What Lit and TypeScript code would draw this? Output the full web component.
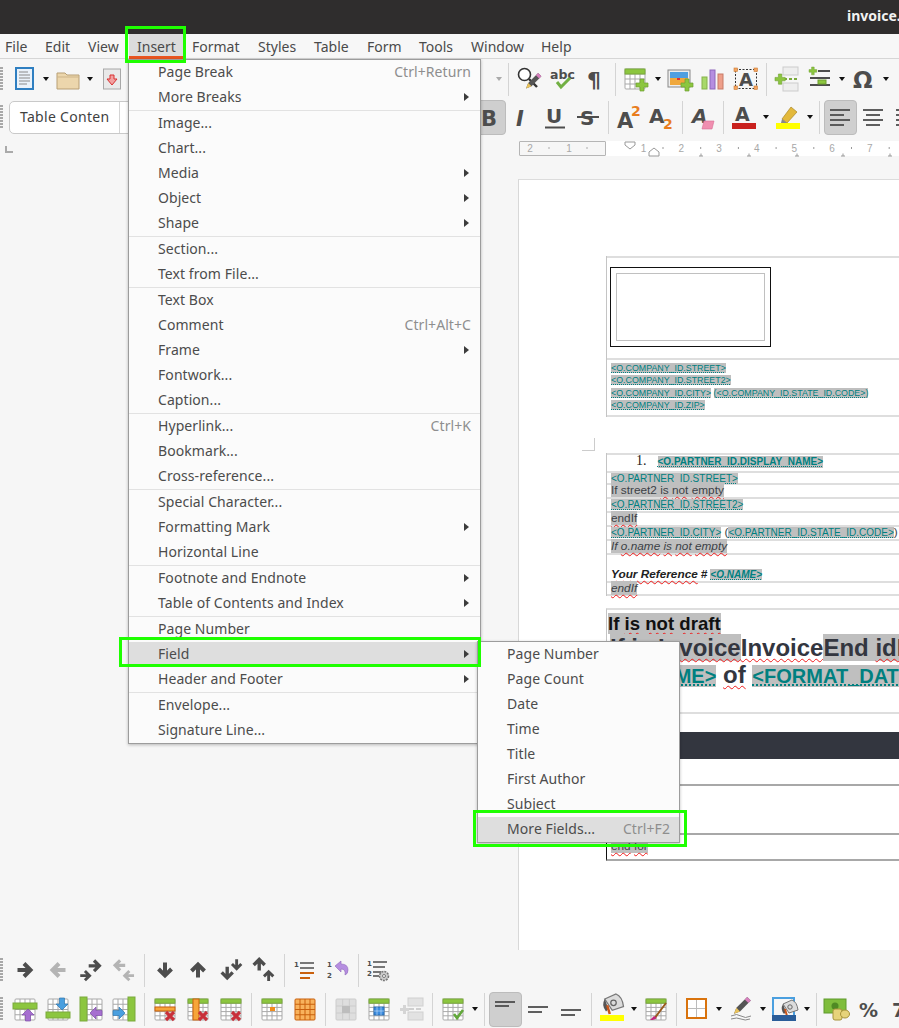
import { LitElement, html, css, svg } from "lit";
import { customElement } from "lit/decorators.js";

const D = "#4d4d4d";
const G = "#8cc63f";
const grid = (x: number, y: number, w: number, h: number, c: number, r: number, hdr = true, line = "#a9a9a9", fill = "#fff") => {
  const cw = w / c, rh = h / r;
  return svg`<rect x=${x} y=${y} width=${w} height=${h} fill=${fill} stroke=${line} rx="1"/>
    ${Array.from({ length: c - 1 }, (_, i) => svg`<path d="M${x + cw * (i + 1)} ${y}v${h}" stroke=${line}/>`)}
    ${Array.from({ length: r - 1 }, (_, i) => svg`<path d="M${x} ${y + rh * (i + 1)}h${w}" stroke=${line}/>`)}
    ${hdr ? svg`<rect x=${x} y=${y} width=${w} height=${rh} fill=${G} stroke="#7aa93c"/>` : ""}`;
};
const arrow = (rot: number, color = D, s = 1, tx = 0, ty = 0, sw = 4) =>
  svg`<g transform="translate(${tx} ${ty}) scale(${s}) rotate(${rot} 12 12)"><path d="M4.500 12h12.500M11 5.500l6.500 6.500-6.500 6.500" fill="none" stroke=${color} stroke-width=${sw}/></g>`;
const fat = (rot: number, color: string, stroke: string, tx: number, ty: number, s = 1) =>
  svg`<g transform="translate(${tx} ${ty}) scale(${s}) rotate(${rot} 6 6)"><path d="M6 0l6 6H8.500v6h-5V6H0z" fill=${color} stroke=${stroke} stroke-width=".7"/></g>`;
const plus = (x: number, y: number, s = 1) =>
  svg`<g transform="translate(${x} ${y}) scale(${s})"><path d="M4 0h4v4h4v4H8v4H4V8H0V4h4z" fill=${G} stroke="#6f9e32" stroke-width=".7"/></g>`;
const redX = (x: number, y: number) =>
  svg`<path d="M${x} ${y}l8 8M${x + 8} ${y}l-8 8" stroke="#c8303a" stroke-width="3.200"/>`;
const bar = (x: number, w: number, c: string, y = 20, h = 4) => svg`<rect x=${x} y=${y} width=${w} height=${h} fill=${c}/>`;
const lines = (ys: number[], ws: number[], x = 2, c = D, sw = 1.8) =>
  ys.map((y, i) => svg`<path d="M${x} ${y}h${ws[i]}" stroke=${c} stroke-width=${sw}/>`);
const T = (x: number, y: number, t: string, size: number, fill = D, extra = "") =>
  svg`<text x=${x} y=${y} font-size=${size} font-family="DejaVu Sans" font-weight="bold" font-style=${extra || "normal"} fill=${fill}>${t}</text>`;
const bucket = (x: number, y: number, s = 1) =>
  svg`<g transform="translate(${x} ${y}) scale(${s})"><path d="M3 4L12 0q5 2 6 10l-9 3z" fill="#dcdcdc" stroke="#777"/><circle cx="10" cy="7" r="2.200" fill="none" stroke="#666"/><path d="M3 4q-3 5 1 10l2-2z" fill="#555"/><path d="M5 9l2 7" stroke="#c8551b" stroke-width="2"/></g>`;
const pencil = (x: number, y: number, len = 1) =>
  svg`<g transform="translate(${x} ${y}) scale(${len})"><path d="M0 14l2-5L11 0l3 3-9 9z" fill="#555"/><path d="M11 0l3 3-2 2-3-3z" fill="#d77fbd"/><path d="M0 14l2-5 3 3z" fill="#e9c25a"/></g>`;

const ICONS: Record<string, unknown> = {
  newdoc: svg`<rect x="4" y="1" width="17" height="21" fill="#eaf2fa" stroke="#2f7fc1" stroke-width="2"/><path d="M7 5h9M7 8h11M7 11h11M7 14h11M7 17h8" stroke="#8a8a8a"/>`,
  folder: svg`<path d="M1 6h8l2 2h12v14H1z" fill="#ecd6ac" stroke="#b89f74"/><path d="M1 10h22" stroke="#cdb489"/>`,
  save: svg`<rect x="3.500" y="2" width="17" height="20" fill="#e9e9e9" stroke="#a8a8a8"/><path d="M10 8h4v4h3l-5 6-5-6h3z" fill="#f2a0a0" stroke="#d83030"/>`,
  find: svg`<circle cx="7.500" cy="7.500" r="6" fill="#fff" stroke="#333" stroke-width="1.600"/><path d="M12 12l8 8" stroke="#333" stroke-width="2.400"/>${pencil(9, 6, 1.1)}`,
  abc: svg`${T(0, 12, "abc", 12.5)}<path d="M7 15l4 5 9-9" fill="none" stroke="#72b043" stroke-width="3"/>`,
  pil: T(4, 21, "¶", 22),
  tableplus: svg`${grid(1, 2, 20, 20, 4, 4)}${plus(12, 12)}`,
  imgplus: svg`<rect x="0" y="3" width="22" height="17" fill="#eee" stroke="#888"/><rect x="2" y="5" width="18" height="6" fill="#4f9fe0"/><rect x="2" y="11" width="18" height="7" fill="#f0a83c"/><path d="M9 12h3" stroke="#d33" stroke-width="2"/>${plus(13, 12)}`,
  chart: svg`<rect x="1" y="10" width="5" height="12" fill="#a8d86a" stroke="#85b24a"/><rect x="9" y="3" width="5" height="19" fill="#b58ee0" stroke="#8e66bb"/><rect x="17" y="7" width="5" height="15" fill="#ee9f8a" stroke="#c77b66"/>`,
  textbox: svg`<rect x="1.500" y="2.500" width="21" height="19" fill="none" stroke="#333" stroke-dasharray="2 1.500"/>${[[0, 1], [20, 1], [0, 19], [20, 19]].map(([x, y]) => svg`<rect x=${x} y=${y} width="3.500" height="3.500" fill="#f4a460" stroke="#c87a35" stroke-width=".6"/>`)}${T(5, 19, "A", 18)}`,
  pagebreak: svg`<rect x="8" y="0" width="15" height="8" fill="#eee" stroke="#ccc"/><rect x="8" y="16" width="15" height="8" fill="#eee" stroke="#ccc"/><path d="M9 12h3m2 0h3m2 0h3" stroke="#7aa93c" stroke-width="2"/>${plus(0, 7, .85)}`,
  field: svg`${plus(1, 0, .65)}<path d="M10 4h12M2 11h20M2 18h20" stroke=${D} stroke-width="2"/><rect x="10" y="13" width="8" height="4" fill=${G} stroke="#6f9e32"/>`,
  omega: T(1, 21, "Ω", 23),
  B: T(4, 21, "B", 21),
  I: T(6, 21, "I", 21, D, "italic"),
  U: svg`${T(3, 18, "U", 20)}<path d="M2 22.500h20" stroke=${D} stroke-width="2"/>`,
  S: svg`${T(4, 20, "S", 20)}<path d="M1 12h22" stroke=${D} stroke-width="2"/>`,
  sup: svg`${T(0, 23, "A", 21)}${T(14, 11, "2", 14, "#e87d1e")}`,
  sub: svg`${T(-1, 18, "A", 20)}${T(13, 24, "2", 14, "#e87d1e")}`,
  erase: svg`${T(1, 18, "A", 20, D, "italic")}<path d="M13 16h10l-2 8H11z" fill="#f08fb0" stroke="#d86d93" stroke-width=".6"/>`,
  fcolor: svg`${T(3, 16, "A", 19)}${bar(0, 24, "#c9211e", 18, 6)}`,
  hl: svg`<path d="M6 14L15 2l6 5-10 11z" fill="#e3b93c" stroke="#a98726" stroke-width=".7"/><path d="M6 14l5 4-4 1-2-1z" fill="#888"/>${bar(0, 24, "#ffff00", 18, 6)}`,
  al: svg`${lines([5, 10, 15, 20], [20, 14, 20, 14])}`,
  ar: svg`${lines([5, 10, 15, 20], [20, 14, 20, 14], 2)}`,
  r: arrow(0),
  lg: arrow(180, "#b4b4b4"),
  rr: svg`${arrow(0, D, .82, 6, -2)}${arrow(0, D, .72, -2, 9)}`,
  ll: svg`${arrow(180, "#b4b4b4", .78, -2, -2)}${arrow(180, "#b4b4b4", .72, 8, 9)}`,
  d: arrow(90),
  u: arrow(-90),
  dd: svg`${arrow(90, D, .85, -2, 5)}${arrow(90, D, .72, 9, -2)}`,
  uu: svg`${arrow(-90, D, .85, -3, -4)}${arrow(-90, D, .72, 8, 9)}`,
  list: svg`${T(1, 9, "1", 7)}<path d="M7 5h14M7 10h14" stroke=${D} stroke-width="1.600"/><path d="M7 15h14M7 20h10" stroke="#c9600d" stroke-width="2"/>`,
  listundo: svg`${T(1, 9, "1", 7)}${T(1, 20, "2", 7)}<path d="M9 8l6-5v3q7 0 7 6 0 4-3 5 1-6-4-6v3z" fill="#b58ee0" stroke="#8e66bb" stroke-width=".6"/>`,
  listgear: svg`${T(0, 8, "1", 7)}${T(0, 18, "2", 7)}<path d="M6 4h14M6 9h12M6 14h8M6 18h6" stroke=${D} stroke-width="1.700"/><circle cx="17" cy="18" r="4.500" fill="#ccc" stroke="#777" stroke-width="1.600" stroke-dasharray="2 1"/><circle cx="17" cy="18" r="1.500" fill="#fff" stroke="#777"/>`,
  t1: svg`${grid(2, 2, 20, 21, 4, 4, false)}<rect x="0" y="6" width="24" height="6" fill=${G} stroke="#7aa93c"/>${fat(0, "#a66fd0", "#7c4ea6", 9, 12)}`,
  t2: svg`${grid(2, 2, 20, 21, 4, 4, false)}<rect x="0" y="15" width="24" height="6" fill=${G} stroke="#7aa93c"/>${fat(180, "#4a9fdf", "#2f76ad", 10, 1)}`,
  t3: svg`${grid(3, 2, 20, 21, 4, 4, false)}<rect x="1" y="0" width="7" height="24" fill=${G} stroke="#7aa93c"/>${fat(-90, "#a66fd0", "#7c4ea6", 11, 10)}`,
  t4: svg`${grid(1, 2, 20, 21, 4, 4, false)}<rect x="16" y="0" width="7" height="24" fill=${G} stroke="#7aa93c"/>${fat(90, "#4a9fdf", "#2f76ad", 1, 10)}`,
  t5: svg`${grid(2, 2, 20, 21, 4, 5)}<rect x="2" y="10" width="20" height="4" fill="#f6a53a" stroke="#c9600d"/>${redX(13, 15)}`,
  t6: svg`${grid(2, 2, 20, 21, 4, 5)}<rect x="7" y="2" width="6" height="21" fill="#f6a53a" stroke="#c9600d"/>${redX(13, 15)}`,
  t7: svg`${grid(2, 2, 20, 21, 4, 5)}${redX(13, 15)}`,
  t8: svg`${grid(2, 2, 20, 21, 4, 5)}<rect x="10" y="10" width="5" height="4" fill="#f08c1e"/>`,
  t9: grid(2, 2, 20, 21, 4, 4, false, "#c9600d", "#f8b25c"),
  t10: svg`${grid(2, 2, 20, 21, 3, 3, false, "#ccc", "#dedede")}<rect x="8" y="9" width="8" height="7" fill="#bdbdbd"/>`,
  t11: svg`${grid(2, 2, 20, 21, 4, 5)}<rect x="7" y="10" width="10" height="8" fill="#3a8bdf" stroke="#2a6db0"/><path d="M10 10v8M14 10v8M7 14h10" stroke="#cfe4fb" stroke-width=".6"/>`,
  t12: svg`<rect x="8" y="1" width="15" height="8" fill="#e2e2e2" stroke="#d0d0d0"/><rect x="8" y="15" width="15" height="8" fill="#e2e2e2" stroke="#d0d0d0"/><path d="M9 12h5m2 0h5" stroke="#cfcfcf" stroke-width="2"/><path d="M3 8h3v3h3v3H6v3H3v-3H0v-3h3z" fill="#d5d5d5"/>`,
  t13: svg`${grid(2, 2, 20, 21, 4, 5)}<path d="M13 17l3 4 6-8" fill="none" stroke="#62a83a" stroke-width="2.600"/>`,
  v1: lines([5, 9], [20, 14]),
  v2: lines([10, 15], [20, 14]),
  v3: lines([13, 18], [20, 14]),
  bk: svg`${bucket(1, -3, 1.25)}${bar(0, 24, "#ffff00", 18, 6)}`,
  t14: svg`${grid(2, 2, 20, 21, 4, 5)}<path d="M10 22L22 6" stroke="#9a5a1e" stroke-width="2"/><path d="M6 23l4-4 3 2-4 2z" fill="#c2267e"/>`,
  brd: svg`<rect x="2" y="2" width="19" height="19" fill="#fff" stroke="#d9730d" stroke-width="2"/><path d="M11.500 3v17M3 11.500h17" stroke="#bbb"/>`,
  pen2: svg`${pencil(5, 0, 1.2)}<path d="M2 19q6-3 10 0t10 0M2 22q6-2 10 0t9 0" fill="none" stroke="#888"/>`,
  bl: svg`<path d="M0 18V1h21v18" fill="none" stroke="#4a9fdf" stroke-width="2"/>${bucket(7, 3)}${bar(-1, 24, "#2a5d99", 18, 6)}`,
  money: svg`<rect x="-1" y="2" width="22" height="14" fill="#7fbd3c" stroke="#5f9a2c"/><circle cx="10" cy="9" r="3.500" fill="#4f8a24"/><rect x="8" y="12" width="9" height="11" rx="2" fill="#e6d37a" stroke="#a6923a"/><ellipse cx="20" cy="17" rx="4.500" ry="4" fill="#e6d37a" stroke="#a6923a"/>`,
  pct: T(1, 20, "%", 19),
  seven: T(1, 20, "7", 19),
};
ICONS["ac"] = [5, 10, 15, 20].map((y, i) => (i % 2 ? svg`<path d="M5 ${y}h14" stroke=${D} stroke-width="1.800"/>` : svg`<path d="M2 ${y}h20" stroke=${D} stroke-width="1.800"/>`));

const TB1 = ["newdoc", "v", "folder", "v", "save", "sp1", "vd", "|", "find", "abc", "pil", "|", "tableplus", "v", "imgplus", "chart", "textbox", "|", "pagebreak", "field", "v", "omega", "v"];
const TB2 = ["*B", "I", "U", "S", "|", "sup", "sub", "|", "erase", "|", "fcolor", "v", "hl", "v", "|", "*al", "ac", "ar"];
const TB3 = ["r", "lg", "rr", "ll", "|", "d", "u", "dd", "uu", "|", "list", "listundo", "|", "listgear"];
const TB4 = ["t1", "t2", "t3", "t4", "|", "t5", "t6", "t7", "|", "t8", "t9", "|", "t10", "t11", "t12", "|", "t13", "v", "|", "*v1", "v2", "v3", "|", "bk", "v", "t14", "|", "brd", "v", "pen2", "v", "bl", "v", "|", "money", "pct", "seven"];

type Item = { t: string; s?: string; sub?: boolean };
const MENU: Item[][] = [
  [{ t: "Page Break", s: "Ctrl+Return" }, { t: "More Breaks", sub: true }],
  [{ t: "Image..." }, { t: "Chart..." }, { t: "Media", sub: true }, { t: "Object", sub: true }, { t: "Shape", sub: true }],
  [{ t: "Section..." }, { t: "Text from File..." }],
  [{ t: "Text Box" }, { t: "Comment", s: "Ctrl+Alt+C" }, { t: "Frame", sub: true }, { t: "Fontwork..." }, { t: "Caption..." }],
  [{ t: "Hyperlink...", s: "Ctrl+K" }, { t: "Bookmark..." }, { t: "Cross-reference..." }],
  [{ t: "Special Character..." }, { t: "Formatting Mark", sub: true }, { t: "Horizontal Line" }],
  [{ t: "Footnote and Endnote", sub: true }, { t: "Table of Contents and Index", sub: true }],
  [{ t: "Page Number" }, { t: "Field", sub: true }, { t: "Header and Footer", sub: true }],
  [{ t: "Envelope..." }, { t: "Signature Line..." }],
];
const SUB: Item[] = [
  { t: "Page Number" }, { t: "Page Count" }, { t: "Date" }, { t: "Time" }, { t: "Title" }, { t: "First Author" }, { t: "Subject" }, { t: "More Fields...", s: "Ctrl+F2" },
];
const BAR = ["File", "Edit", "View", "Insert", "Format", "Styles", "Table", "Form", "Tools", "Window", "Help"];

@customElement("app-root")
export class AppRoot extends LitElement {
  static styles = css`
    :host { display: block; width: 899px; height: 1028px; overflow: hidden; position: relative; background: #f6f6f6; font-family: "Noto Sans", sans-serif; color: #444; }
    .title { height: 34px; background: #2f2d2d; color: #f2f2f2; font-weight: 700; font-size: 14px; line-height: 32px; padding-left: 847px; white-space: nowrap; overflow: hidden; }
    .menubar { height: 25px; box-sizing: border-box; display: flex; background: #f7f7f7; border-bottom: 1px solid #d6d6d6; font-size: 14px; line-height: 25px; padding-left: 0; white-space: nowrap; color: #4a4a4a; }
    .mb { padding: 0 8px; flex: none; box-sizing: border-box; height: 25px; }
    .mb.w0 { width: 40px; padding-left: 5px; } .mb.w1 { width: 43px; padding-left: 5px; } .mb.w2 { width: 41px; padding-left: 5px; }
    .mb.on { width: 55px; background: #dcdcdc; border-bottom: 3px solid #e95420; padding-left: 8px; margin-left: 5px; }
    .mb.w4 { width: 66px; padding-left: 8px; } .mb.w5 { width: 56px; padding-left: 8px; } .mb.w6 { width: 53px; padding-left: 8px; } .mb.w7 { width: 52px; padding-left: 8px; } .mb.w8 { width: 52px; padding-left: 8px; } .mb.w9 { width: 70px; padding-left: 8px; }
    .tb { display: flex; align-items: center; white-space: nowrap; flex: none; position: relative; }
    .tb1 { height: 40px; padding-left: 7.500px; }
    .tb2 { height: 36px; padding-left: 9px; }
    .tb3, .tb4 { height: 36px; padding-left: 8.500px; }
    .grip { position: absolute; left: 0; top: 50%; margin-top: -12px; width: 3px; height: 23px; background: repeating-linear-gradient(#a8a8a8 0 2px, transparent 2px 3px); }
    .slot { width: 33px; height: 35px; flex: none; display: flex; align-items: center; justify-content: center; box-sizing: border-box; }
    .slot.on { background: #cfcfcf; border: 1px solid #bcbcbc; border-radius: 4px; }
    .slot svg { width: 24px; height: 24px; overflow: visible; display: block; }
    .drop { width: 11px; flex: none; display: flex; justify-content: center; }
    .drop i { width: 0; height: 0; border: 3.500px solid transparent; border-top: 4px solid #111; border-bottom: 0; }
    .drop.off i { border-top-color: #aaa; }
    .sep { width: 1px; height: 33px; margin: 0 3.500px; background: #d4d4d4; flex: none; }
    .sp1 { width: 364.500px; flex: none; }
    .sp3 { width: 343.500px; flex: none; }
    .combo { width: 120px; height: 33px; box-sizing: border-box; flex: none; background: #fff; border: 1px solid #c9c9c9; border-radius: 5px 0 0 5px; display: flex; font-size: 14px; letter-spacing: .3px; line-height: 29px; color: #3f3f3f; }
    .combo span { width: 110px; padding-left: 10px; box-sizing: border-box; border-right: 1px solid #d4d4d4; }
    .work { position: relative; height: 815px; padding-left: 518px; overflow: hidden; box-sizing: border-box; }
    .corner { position: absolute; left: 5px; top: 11px; width: 6px; height: 5px; border-left: 2px solid #aaa; border-bottom: 2px solid #aaa; }
    .ruler { margin-top: 6px; height: 15px; display: flex; position: relative; font: 10px "Liberation Sans", sans-serif; color: #a8a8a8; line-height: 15px; }
    .rl { width: 87px; box-sizing: border-box; margin-left: 1px; border: 1px solid #b5b5b5; display: flex; gap: 29px; padding-left: 5px; border-radius: 1px; line-height: 13px; }
    .rl span { width: 10px; text-align: center; flex: none; }
    .rr { width: 294px; background: #fff; display: flex; padding-left: 19px; box-sizing: border-box; }
    .rr span { width: 37.700px; text-align: center; flex: none; }
    .rmarks { position: absolute; left: 0; top: 0; width: 381px; height: 18px; overflow: visible; }
    .page { margin-top: 23px; width: 520px; height: 771px; background: #fff; box-sizing: border-box; border-left: 1px solid #d8d8d8; border-top: 1px solid #dcdcdc; padding: 76px 0 0 87px; font-family: "Liberation Sans", sans-serif; position: relative; }
    .tbl { width: 420px; border-left: 1px solid #c4c4c4; position: relative; box-sizing: border-box; }
    .row { box-sizing: border-box; border-top: 2px solid #dedede; white-space: nowrap; }
    .last { border-bottom: 2px solid #dedede; }
    .r1 { height: 102px; padding: 9px 0 0 3px; }
    .imgbox { width: 161px; height: 80px; box-sizing: border-box; border: 1px solid #111; padding: 5px; }
    .imgbox div { height: 100%; box-sizing: border-box; border: 1px solid #c0c0c0; }
    .r2 { height: 59px; padding: 2px 0 0 4px; font-size: 8.850px; line-height: 12.300px; color: #008080; }
    .g { background: #bfbfbf; }
    .dot { text-decoration: underline dotted #008080; text-underline-offset: 1px; }
    .w { text-decoration: underline wavy #f01c1c 1px; text-underline-offset: 2px; }
    .t2 { margin-top: 36px; font-size: 11.800px; color: #3c3f46; }
    .mark { position: absolute; left: -25px; top: -15px; width: 13px; height: 13px; box-sizing: border-box; border-right: 1px solid #ccc; border-bottom: 1px solid #ccc; }
    .t2 .row { padding-left: 4px; line-height: 11px; }
    .h18 { height: 18px; } .h12 { height: 12px; } .h14 { height: 14px; } .h28 { height: 28px; } .h15 { height: 15px; }
    .t2 .num { padding-left: 29px; display: flex; gap: 11px; line-height: 12px; align-items: baseline; }
    .num b { font: 14px "Liberation Serif", serif; line-height: 12px; color: #222; }
    .num .dot { font-weight: 700; font-size: 10px; }
    .t2 .c { color: #008080; font-size: 10px; }
    .it { font-style: italic; }
    .end { display: flex; align-items: flex-end; height: 100%; gap: 3px; padding-bottom: 1px; box-sizing: border-box; }
    .end b { color: #222; font-style: italic; }
    .t3 { margin-top: 12px; height: 106px; border-top: 2px solid #dedede; border-bottom: 2px solid #dedede; padding-top: 3px; white-space: nowrap; font-weight: 700; color: #33363f; }
    .l1 { font-size: 18.600px; line-height: 21px; color: #111; padding-left: 1px; }
    .l2 { font-size: 24px; line-height: 27px; padding-left: 3px; }
    .l3 { font-size: 24px; line-height: 28px; padding-left: 6px; }
    .l3 .c { font-size: 20px; color: #008080; text-decoration: underline dotted #008080; text-underline-offset: 1px; }
    .dark { margin-top: 18px; height: 27px; background: #33363f; width: 420px; }
    .lg1 { height: 25px; border-bottom: 2px solid #a8a8a8; width: 420px; }
    .lg2 { height: 47px; border-bottom: 2px solid #a8a8a8; width: 420px; }
    .endfor { height: 26px; width: 420px; box-sizing: border-box; border-left: 1px solid #111; border-bottom: 2px solid #a8a8a8; padding: 5px 0 0 4px; font-size: 11.800px; line-height: 13px; color: #3c3f46; }
    .bot { height: 78px; padding-top: 2px; box-sizing: border-box; display: flex; flex-direction: column; gap: 3px; background: #f6f6f6; }
    .pop { position: absolute; background: #fbfbfb; border: 1px solid #9c9c9c; box-shadow: 0 1px 3px rgba(0,0,0,.25); font-size: 14px; letter-spacing: .07px; color: #4c4c4c; white-space: nowrap; }
    .main { left: 128px; top: 59px; width: 351px; }
    .subm { left: 477px; top: 641px; width: 201px; }
    .it0 { height: 25px; box-sizing: border-box; line-height: 23px; padding: 0 9px 2px 29px; display: flex; justify-content: space-between; align-items: center; }
    .it0.hi { background: #dedede; }
    .sc { color: #8e8e8e; }
    .tri { width: 0; height: 0; border: 4.500px solid transparent; border-left: 5px solid #3c3c3c; border-right: 0; margin-right: 2px; }
    .msep { height: 1px; background: #e2e2e2; }
    .hl { position: absolute; border: 3px solid #1eff00; box-sizing: border-box; }
    .h-a { left: 125px; top: 26px; width: 61px; height: 37px; }
    .h-b { left: 119px; top: 637px; width: 362px; height: 30px; }
    .h-c { left: 473px; top: 810px; width: 214px; height: 37px; }
  `;

  private cell(n: string) {
    if (n === "|") return html`<div class="sep"></div>`;
    if (n === "v") return html`<div class="drop"><i></i></div>`;
    if (n === "vd") return html`<div class="drop off"><i></i></div>`;
    if (n === "sp1") return html`<div class="sp1"></div>`;
    const on = n.startsWith("*");
    const k = on ? n.slice(1) : n;
    return html`<div class="slot ${on ? "on" : ""}"><svg viewBox="0 0 24 24">${ICONS[k]}</svg></div>`;
  }

  private item(i: Item, hi = false) {
    return html`<div class="it0 ${hi ? "hi" : ""}"><span>${i.t}</span>${i.s ? html`<span class="sc">${i.s}</span>` : ""}${i.sub ? html`<span class="tri"></span>` : ""}</div>`;
  }

  render() {
    const marks: unknown[] = [];
    for (let i = 0; i < 7; i++) {
      const x = 145 + i * 37.7;
      marks.push(svg`<path d="M${x} 6v2" stroke="#999"/>`);
    }
    for (const x of [31, 69]) marks.push(svg`<path d="M${x} 6v2" stroke="#aaa"/>`);
    for (const x of [183, 231, 279, 325, 372]) marks.push(svg`<path d="M${x} 12.500v2.500M${x - 2} 15h4" stroke="#999"/>`);
    return html`
      <div class="title">invoice.odt</div>
      <div class="menubar">
        ${BAR.map((b, i) => html`<div class="mb ${b === "Insert" ? "on" : "w" + i}">${b}</div>`)}
      </div>
      <div class="tb tb1"><div class="grip"></div>${TB1.map(n => this.cell(n))}</div>
      <div class="tb tb2"><div class="grip"></div>
        <div class="combo"><span>Table Conten</span></div><div class="sp3"></div>
        ${TB2.map(n => this.cell(n))}
      </div>
      <div class="work">
        <div class="corner"></div>
        <div class="ruler">
          <div class="rl"><span>2</span><span>1</span></div>
          <div class="rr"><span>1</span><span>2</span><span>3</span><span>4</span><span>5</span><span>6</span><span>7</span></div>
          <svg class="rmarks" viewBox="0 0 381 18">
            ${marks}
            <path d="M107 1h10v3l-5 4-5-4z" fill="#fff" stroke="#999"/>
            <path d="M131 15v-4l5-4 5 4v4z" fill="#fff" stroke="#999"/>
          </svg>
        </div>
        <div class="page">
          <div class="tbl">
            <div class="row r1"><div class="imgbox"><div></div></div></div>
            <div class="row last r2">
              <div><span class="g dot">&lt;O.COMPANY_ID.STREET&gt;</span></div>
              <div><span class="g dot">&lt;O.COMPANY_ID.STREET2&gt;</span></div>
              <div><span class="g dot">&lt;O.COMPANY_ID.CITY&gt;</span> <span class="g">(<span class="dot">&lt;O.COMPANY_ID.STATE_ID.CODE&gt;</span>)</span></div>
              <div><span class="g dot">&lt;O.COMPANY_ID.ZIP&gt;</span></div>
            </div>
          </div>
          <div class="tbl t2">
            <div class="mark"></div>
            <div class="row h18 num"><b>1.</b><span class="g dot c">&lt;O.PARTNER_ID.DISPLAY_NAME&gt;</span></div>
            <div class="row h12"><span class="g dot c">&lt;O.PARTNER_ID.STREET&gt;</span></div>
            <div class="row h14"><span class="g">If street2 <span class="w">is</span> <span class="w">not</span> <span class="w">empty</span></span></div>
            <div class="row h14"><span class="g dot c">&lt;O.PARTNER_ID.STREET2&gt;</span></div>
            <div class="row h14"><span class="g w">endIf</span></div>
            <div class="row h14"><span class="g dot c">&lt;O.PARTNER_ID.CITY&gt;</span> (<span class="g dot c">&lt;O.PARTNER_ID.STATE_ID.CODE&gt;</span>)</div>
            <div class="row h14"><span class="g it">If <span class="w">o.name</span> <span class="w">is</span> <span class="w">not</span> <span class="w">empty</span></span></div>
            <div class="row h28"><div class="end"><b class="w">Your Reference</b><b>#</b><span class="g dot c it"><strong>&lt;O.NAME&gt;</strong></span></div></div>
            <div class="row h15 last"><span class="g it w">endIf</span></div>
          </div>
          <div class="tbl t3">
            <div class="l1"><span class="g">If <span class="w">is</span> <span class="w">not</span> <span class="w">draft</span></span></div>
            <div class="l2"><span class="g w">If is Invoice</span><span class="w">Invoice</span><span class="g">End <span class="w">idIf</span></span></div>
            <div class="l3"><span class="g c">&lt;O.NAME&gt;</span> <span class="w">of</span> <span class="g c">&lt;FORMAT_DATE&gt;</span></div>
          </div>
          <div class="dark"></div>
          <div class="lg1"></div>
          <div class="lg2"></div>
          <div class="endfor"><span class="g"><span class="w">end</span> <span class="w">for</span></span></div>
        </div>
      </div>
      <div class="bot">
        <div class="tb tb3"><div class="grip"></div>${TB3.map(n => this.cell(n))}</div>
        <div class="tb tb4"><div class="grip"></div>${TB4.map(n => this.cell(n))}</div>
      </div>
      <div class="pop main">
        ${MENU.map((g, i) => html`${i ? html`<div class="msep"></div>` : ""}${g.map(it => this.item(it, it.t === "Field"))}`)}
      </div>
      <div class="pop subm">${SUB.map(it => this.item(it, it.t === "More Fields..."))}</div>
      <div class="hl h-a"></div><div class="hl h-b"></div><div class="hl h-c"></div>
    `;
  }
}
